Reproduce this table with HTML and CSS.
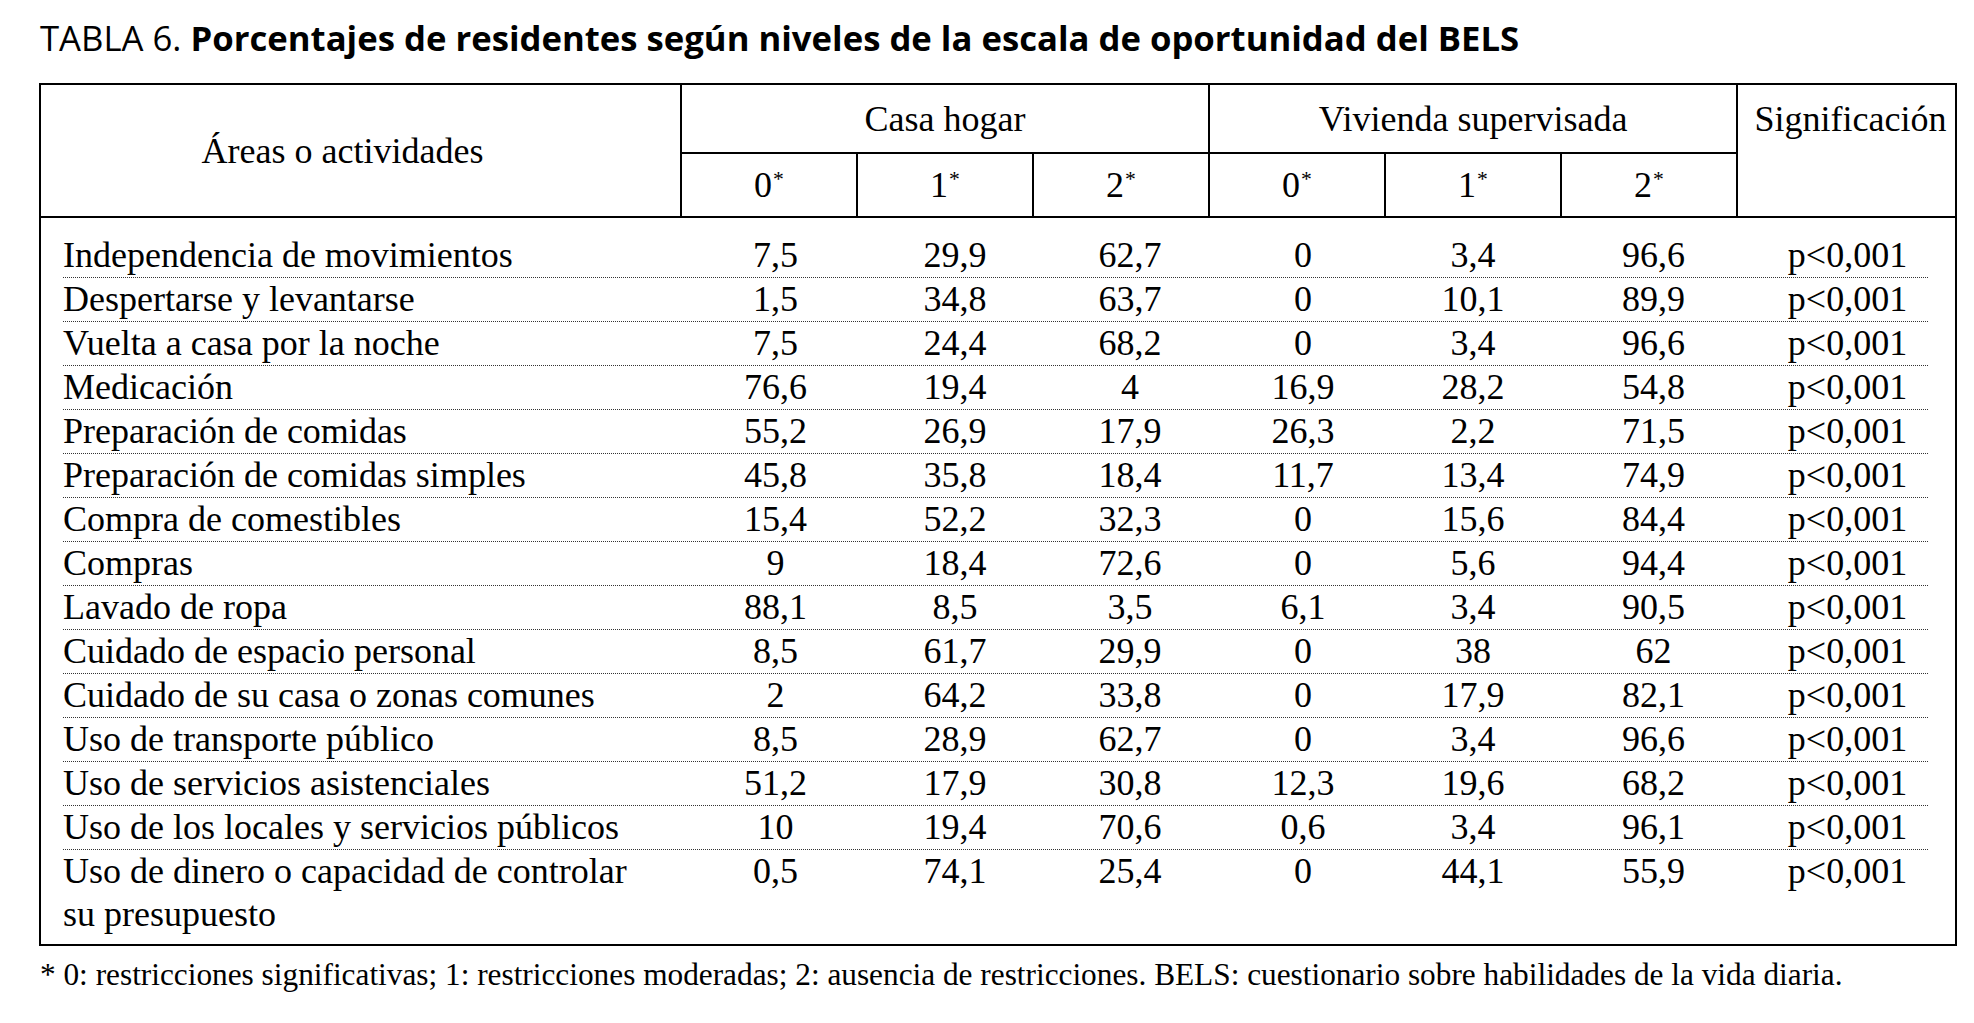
FILE: index.html
```html
<!DOCTYPE html>
<html lang="es">
<head>
<meta charset="utf-8">
<title>Tabla 6</title>
<link rel="stylesheet" href="styles.css">
</head>
<body>
<div class="page">
  <h1 class="title">TABLA 6. <b>Porcentajes de residentes según niveles de la escala de oportunidad del BELS</b></h1>
  <div class="tbl">
    <div class="head">
      <div class="h-area">Áreas o actividades</div>
      <div class="h-group">Casa hogar</div>
      <div class="h-group">Vivienda supervisada</div>
      <div class="h-sig"><span class="sig-label">Significación</span></div>
      <div class="h-sub"><span>0<sup>*</sup></span></div>
      <div class="h-sub"><span>1<sup>*</sup></span></div>
      <div class="h-sub"><span>2<sup>*</sup></span></div>
      <div class="h-sub"><span>0<sup>*</sup></span></div>
      <div class="h-sub"><span>1<sup>*</sup></span></div>
      <div class="h-sub"><span>2<sup>*</sup></span></div>
    </div>
    <div class="body">
      <div class="row"><div class="area">Independencia de movimientos</div><div class="num">7,5</div><div class="num">29,9</div><div class="num">62,7</div><div class="num">0</div><div class="num">3,4</div><div class="num">96,6</div><div class="sig">p&lt;0,001</div></div>
      <div class="row"><div class="area">Despertarse y levantarse</div><div class="num">1,5</div><div class="num">34,8</div><div class="num">63,7</div><div class="num">0</div><div class="num">10,1</div><div class="num">89,9</div><div class="sig">p&lt;0,001</div></div>
      <div class="row"><div class="area">Vuelta a casa por la noche</div><div class="num">7,5</div><div class="num">24,4</div><div class="num">68,2</div><div class="num">0</div><div class="num">3,4</div><div class="num">96,6</div><div class="sig">p&lt;0,001</div></div>
      <div class="row"><div class="area">Medicación</div><div class="num">76,6</div><div class="num">19,4</div><div class="num">4</div><div class="num">16,9</div><div class="num">28,2</div><div class="num">54,8</div><div class="sig">p&lt;0,001</div></div>
      <div class="row"><div class="area">Preparación de comidas</div><div class="num">55,2</div><div class="num">26,9</div><div class="num">17,9</div><div class="num">26,3</div><div class="num">2,2</div><div class="num">71,5</div><div class="sig">p&lt;0,001</div></div>
      <div class="row"><div class="area">Preparación de comidas simples</div><div class="num">45,8</div><div class="num">35,8</div><div class="num">18,4</div><div class="num">11,7</div><div class="num">13,4</div><div class="num">74,9</div><div class="sig">p&lt;0,001</div></div>
      <div class="row"><div class="area">Compra de comestibles</div><div class="num">15,4</div><div class="num">52,2</div><div class="num">32,3</div><div class="num">0</div><div class="num">15,6</div><div class="num">84,4</div><div class="sig">p&lt;0,001</div></div>
      <div class="row"><div class="area">Compras</div><div class="num">9</div><div class="num">18,4</div><div class="num">72,6</div><div class="num">0</div><div class="num">5,6</div><div class="num">94,4</div><div class="sig">p&lt;0,001</div></div>
      <div class="row"><div class="area">Lavado de ropa</div><div class="num">88,1</div><div class="num">8,5</div><div class="num">3,5</div><div class="num">6,1</div><div class="num">3,4</div><div class="num">90,5</div><div class="sig">p&lt;0,001</div></div>
      <div class="row"><div class="area">Cuidado de espacio personal</div><div class="num">8,5</div><div class="num">61,7</div><div class="num">29,9</div><div class="num">0</div><div class="num">38</div><div class="num">62</div><div class="sig">p&lt;0,001</div></div>
      <div class="row"><div class="area">Cuidado de su casa o zonas comunes</div><div class="num">2</div><div class="num">64,2</div><div class="num">33,8</div><div class="num">0</div><div class="num">17,9</div><div class="num">82,1</div><div class="sig">p&lt;0,001</div></div>
      <div class="row"><div class="area">Uso de transporte público</div><div class="num">8,5</div><div class="num">28,9</div><div class="num">62,7</div><div class="num">0</div><div class="num">3,4</div><div class="num">96,6</div><div class="sig">p&lt;0,001</div></div>
      <div class="row"><div class="area">Uso de servicios asistenciales</div><div class="num">51,2</div><div class="num">17,9</div><div class="num">30,8</div><div class="num">12,3</div><div class="num">19,6</div><div class="num">68,2</div><div class="sig">p&lt;0,001</div></div>
      <div class="row"><div class="area">Uso de los locales y servicios públicos</div><div class="num">10</div><div class="num">19,4</div><div class="num">70,6</div><div class="num">0,6</div><div class="num">3,4</div><div class="num">96,1</div><div class="sig">p&lt;0,001</div></div>
      <div class="row"><div class="area">Uso de dinero o capacidad de controlar<br>su presupuesto</div><div class="num">0,5</div><div class="num">74,1</div><div class="num">25,4</div><div class="num">0</div><div class="num">44,1</div><div class="num">55,9</div><div class="sig">p&lt;0,001</div></div>
    </div>
  </div>
  <p class="note">* 0: restricciones significativas; 1: restricciones moderadas; 2: ausencia de restricciones. BELS: cuestionario sobre habilidades de la vida diaria.</p>
</div>
</body>
</html>
```

FILE: styles.css
```css
html, body {
  margin: 0;
  padding: 0;
  background: #fff;
}

body {
  font-family: "Liberation Serif", "Times New Roman", serif;
  color: #000;
}

.page {
  padding: 16px 0 0 39px;
  width: 1918px;
}

.title {
  font-family: "Open Sans", "Noto Sans", sans-serif;
  font-weight: 400;
  font-size: 34.7px;
  line-height: 44px;
  margin: 0 0 23px 1px;
  white-space: nowrap;
}

.title b {
  font-weight: 700;
}

.tbl {
  box-sizing: border-box;
  width: 1918px;
  border: 2px solid #000;
  font-size: 36px;
}

.head {
  display: grid;
  grid-template-columns: 641px repeat(6, 176px) 1fr;
  grid-template-rows: 67px 64px;
  border-bottom: 2px solid #000;
  line-height: 36px;
}

.head > div {
  box-sizing: border-box;
  display: flex;
  align-items: center;
  justify-content: center;
}

.h-area {
  grid-column: 1;
  grid-row: 1 / 3;
  border-right: 2px solid #000;
  padding-right: 36px;
}

.h-group {
  grid-row: 1;
  grid-column: span 3;
  border-right: 2px solid #000;
}

.head > .h-sig {
  grid-column: 8;
  grid-row: 1 / 3;
  align-items: flex-start;
  padding-left: 8px;
}

.sig-label {
  height: 67px;
  display: flex;
  align-items: center;
}

.h-sub {
  grid-row: 2;
  border-top: 2px solid #000;
  border-right: 2px solid #000;
}

.h-sub sup {
  font-size: 0.6em;
  line-height: 0;
  vertical-align: 0.5em;
  margin-left: 1px;
}

.body {
  padding: 16px 27px 8px 22px;
  line-height: 43px;
}

.row {
  display: grid;
  grid-template-columns: 630px 165px 194px 156px 190px 150px 211px 1fr;
  border-bottom: 1px dotted #333;
}

.row:last-child {
  border-bottom: none;
}

.num {
  text-align: center;
}

.sig {
  text-align: center;
  padding-left: 8px;
}

.note {
  font-size: 31.3px;
  line-height: 36px;
  margin: 11px 0 0 1px;
  white-space: nowrap;
}
```
